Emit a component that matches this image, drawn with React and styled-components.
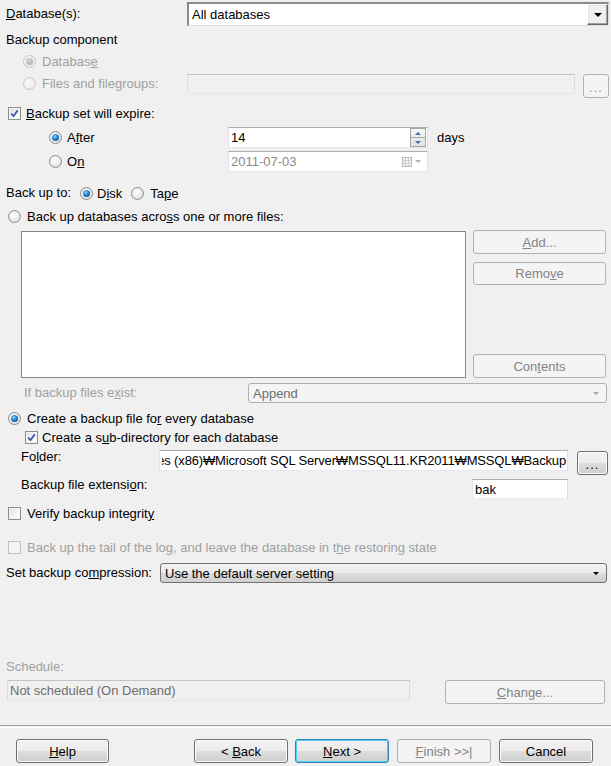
import React from 'react'
import styled, { createGlobalStyle, css } from 'styled-components'

const GlobalStyle = createGlobalStyle`
    html, body {
        margin: 0;
        padding: 0;
        background: #f0f0f0;
    }
    body {
        font-family: "Liberation Sans", Arial, sans-serif;
        font-size: 13px;
        color: #000;
    }
`

const Dialog = styled.div`
    width: 611px;
    height: 766px;
    display: flex;
    flex-direction: column;
    background: #f0f0f0;
    overflow: hidden;
`

const Row = styled.div`
    display: flex;
    align-items: ${props => props.$align || 'center'};
    height: ${props => props.$h || 18}px;
    margin-top: ${props => props.$mt || 0}px;
    padding-left: ${props => props.$pl || 0}px;
    gap: ${props => props.$gap || 0}px;
`

const Label = styled.span`
    display: inline-block;
    flex: none;
    width: ${props => (props.$w ? props.$w + 'px' : 'auto')};
    color: ${props => (props.$disabled ? '#a0a0a0' : '#000')};
    white-space: nowrap;
    line-height: 16px;
`

const Option = styled.label`
    display: flex;
    align-items: center;
    flex: none;
    gap: ${props => props.$gap || 5}px;
    width: ${props => (props.$w ? props.$w + 'px' : 'auto')};
    margin-right: ${props => props.$mr || 0}px;
    color: ${props => (props.$disabled ? '#a0a0a0' : '#000')};
    white-space: nowrap;
`

const RadioDot = styled.span`
    position: relative;
    flex: none;
    width: 11px;
    height: 11px;
    border-radius: 50%;
    border: 1px solid ${props => (props.$disabled ? '#c6c6c6' : '#8a8a8a')};
    background: ${props => (props.$disabled
        ? 'radial-gradient(circle at 40% 40%, #fafafa, #e6e6e6)'
        : 'radial-gradient(circle at 40% 40%, #ffffff, #d8d8d8)')};

    ${props => props.$checked && css`
        &::after {
            content: '';
            position: absolute;
            left: 2px;
            top: 2px;
            width: 7px;
            height: 7px;
            border-radius: 50%;
            background: ${props.$disabled
                ? 'radial-gradient(circle at 40% 35%, #d8d8d8, #a8a8a8)'
                : 'radial-gradient(circle at 40% 35%, #8ed8ff 0%, #1a7fd0 45%, #0b3f7a 100%)'};
        }
    `}
`

const CheckBox = styled.span`
    flex: none;
    width: 11px;
    height: 11px;
    border: 1px solid ${props => (props.$disabled ? '#c0c0c0' : '#8e8f8f')};
    background: ${props => (props.$disabled
        ? '#f4f4f4'
        : 'linear-gradient(135deg, #dcdcdc 0%, #ffffff 80%)')};
    box-shadow: inset 0 0 0 1px #f4f4f4;
    display: flex;
    align-items: center;
    justify-content: center;

    svg {
        display: block;
    }
`

const TextBox = styled.div`
    flex: none;
    box-sizing: border-box;
    width: ${props => props.$w}px;
    height: ${props => props.$h || 21}px;
    border: 1px solid;
    border-color: #abadb3 #dbdfe6 #e3e9ef #e2e3ea;
    background: ${props => (props.$disabled ? '#f0f0f0' : '#ffffff')};
    color: ${props => (props.$disabled ? '#8a8a8a' : '#000')};
    display: flex;
    align-items: center;
    padding-left: 2px;
    overflow: hidden;
    white-space: nowrap;
`

const DisabledField = styled(TextBox)`
    border-color: #c2c2c2 #dcdcdc #e6e6e6 #dcdcdc;
    background: #f0f0f0;
    color: #8d8d8d;
`

/* the path is scrolled to its end, like the real edit box */
const PathText = styled.div`
    flex: 1;
    overflow: hidden;
    white-space: nowrap;
    direction: rtl;
    padding-right: 1px;
    letter-spacing: -0.15px;

    span {
        direction: ltr;
        unicode-bidi: isolate;
    }
`

const BoxValue = styled.span`
    flex: 1;
    line-height: 16px;
`

const SpinButtons = styled.div`
    flex: none;
    width: 14px;
    height: 17px;
    margin-right: 1px;
    display: flex;
    flex-direction: column;
    border: 1px solid #a7a7a7;
    background: linear-gradient(#f6f6f6, #e2e2e2);
`

const SpinHalf = styled.div`
    flex: 1;
    display: flex;
    align-items: center;
    justify-content: center;
    border-top: ${props => (props.$down ? '1px solid #a7a7a7' : 'none')};
`

const TriUp = styled.span`
    width: 0;
    height: 0;
    border-left: 3px solid transparent;
    border-right: 3px solid transparent;
    border-bottom: 3px solid #4a68b0;
`

const TriDown = styled.span`
    width: 0;
    height: 0;
    border-left: ${props => props.$size || 3}px solid transparent;
    border-right: ${props => props.$size || 3}px solid transparent;
    border-top: ${props => props.$size || 3}px solid ${props => props.$color || '#000'};
`

const ClassicCombo = styled.div`
    flex: none;
    box-sizing: border-box;
    width: ${props => props.$w}px;
    height: 24px;
    border-top: 2px solid #8a8a8a;
    border-left: 2px solid #8a8a8a;
    border-bottom: 1px solid #dcdcdc;
    border-right: 1px solid #dcdcdc;
    background: #fff;
    display: flex;
    align-items: center;
    padding-left: 3px;
`

const ClassicDrop = styled.div`
    flex: none;
    box-sizing: border-box;
    width: 21px;
    height: 21px;
    margin-left: auto;
    background: #f0f0f0;
    border: 1px solid;
    border-color: #ffffff #696969 #696969 #ffffff;
    box-shadow: inset -1px -1px 0 #a0a0a0, inset 1px 1px 0 #e3e3e3;
    display: flex;
    align-items: center;
    justify-content: center;
`

const ButtonCombo = styled.div`
    flex: none;
    box-sizing: border-box;
    width: ${props => props.$w}px;
    height: 20px;
    border: 1px solid ${props => (props.$disabled ? '#adb2b5' : '#707070')};
    border-radius: 3px;
    background: ${props => (props.$disabled
        ? '#f4f4f4'
        : 'linear-gradient(#f2f2f2 0%, #ebebeb 50%, #dddddd 51%, #cfcfcf 100%)')};
    color: ${props => (props.$disabled ? '#6d6d6d' : '#000')};
    display: flex;
    align-items: center;
    justify-content: space-between;
    padding: 0 7px 0 4px;
`

const ListBox = styled.div`
    flex: none;
    box-sizing: border-box;
    width: 445px;
    height: 147px;
    border: 1px solid #828790;
    background: #fff;
`

const ButtonColumn = styled.div`
    flex: none;
    width: 133px;
    height: 148px;
    display: flex;
    flex-direction: column;
    gap: 8px;
    margin-top: -1px;

    & > :last-child {
        margin-top: auto;
    }
`

const Button = styled.div`
    flex: none;
    box-sizing: border-box;
    width: ${props => props.$w}px;
    height: ${props => props.$h || 24}px;
    margin-left: ${props => props.$ml || 0}px;
    border-radius: 3px;
    border: 1px solid #707070;
    background: linear-gradient(#f2f2f2 0%, #ebebeb 50%, #dddddd 51%, #cfcfcf 100%);
    box-shadow: inset 0 0 0 1px #fcfcfc;
    display: flex;
    align-items: center;
    justify-content: center;
    color: #000;
    white-space: pre;

    ${props => props.$disabled && css`
        border-color: #adb2b5;
        background: #f4f4f4;
        box-shadow: none;
        color: #838383;
    `}

    ${props => props.$focus && css`
        border-color: #3c7fb1;
        box-shadow: inset 0 0 0 1px #48d4f6;
    `}
`

const Dots = styled.span`
    letter-spacing: 1px;
    margin-top: 2px;
    color: ${props => (props.$disabled ? '#9a9a9a' : '#000')};
`

const Separator = styled.div`
    height: 1px;
    margin-top: 21px;
    border-top: 1px solid #a0a0a0;
    border-bottom: 1px solid #ffffff;
`

const Footer = styled.div`
    display: flex;
    align-items: center;
    height: 24px;
    margin-top: 11px;
    padding-left: 16px;
`

const Radio = ({ checked, disabled, children, ...rest }) => (
    <Option $disabled={disabled} {...rest}>
        <RadioDot $checked={checked} $disabled={disabled} />
        <span>{children}</span>
    </Option>
)

const Check = ({ checked, disabled, children, ...rest }) => (
    <Option $disabled={disabled} {...rest}>
        <CheckBox $disabled={disabled}>
            {checked && (
                <svg width="9" height="9" viewBox="0 0 9 9">
                    <path d="M1.2 4.6 L3.5 7 L7.8 1.4" fill="none" stroke="#3d5aa8" strokeWidth="1.8" />
                </svg>
            )}
        </CheckBox>
        <span>{children}</span>
    </Option>
)

const CalendarIcon = () => (
    <svg width="22" height="12" viewBox="0 0 22 12" style={{ marginRight: 4, flex: 'none' }}>
        <rect x="1.5" y="1.5" width="9" height="9" fill="#f4f4f4" stroke="#b8b8b8" />
        <path d="M1.5 4.5 H10.5 M1.5 7.5 H10.5 M4.5 1.5 V10.5 M7.5 1.5 V10.5" stroke="#cfcfcf" />
        <path d="M14 4 L20 4 L17 7 Z" fill="#b0b0b0" />
    </svg>
)

const App = () => {
    return (
        <Dialog>
            <GlobalStyle />

            <Row $h={24} $mt={2} $pl={6}>
                <Label $w={181}><u>D</u>atabase(s):</Label>
                <ClassicCombo $w={422}>
                    <span>All databases</span>
                    <ClassicDrop>
                        <TriDown $size={4} />
                    </ClassicDrop>
                </ClassicCombo>
            </Row>

            <Row $mt={5} $pl={6}>
                <Label>Backup component</Label>
            </Row>

            <Row $mt={3} $pl={23}>
                <Radio checked disabled $gap={6}>Databas<u>e</u></Radio>
            </Row>

            <Row $h={24} $mt={4} $pl={23} $align="flex-start">
                <Radio disabled $gap={6} $w={164} style={{ height: 18 }}>
                    Files and file<u>g</u>roups:
                </Radio>
                <DisabledField $w={388} $h={20} />
                <Button $w={26} $ml={8} $disabled>
                    <Dots $disabled>...</Dots>
                </Button>
            </Row>

            <Row $mt={6} $pl={8}>
                <Check checked><u>B</u>ackup set will expire:</Check>
            </Row>

            <Row $h={21} $mt={5} $pl={49}>
                <Radio checked $w={179}>A<u>f</u>ter</Radio>
                <TextBox $w={200}>
                    <BoxValue>14</BoxValue>
                    <SpinButtons>
                        <SpinHalf><TriUp /></SpinHalf>
                        <SpinHalf $down><TriDown $color="#4a68b0" /></SpinHalf>
                    </SpinButtons>
                </TextBox>
                <Label style={{ marginLeft: 9 }}>days</Label>
            </Row>

            <Row $h={21} $mt={3} $pl={49}>
                <Radio $w={179}>O<u>n</u></Radio>
                <TextBox $w={200} $disabled style={{ background: '#fff' }}>
                    <BoxValue>2011-07-03</BoxValue>
                    <CalendarIcon />
                </TextBox>
            </Row>

            <Row $mt={12} $pl={6}>
                <Label $w={74}>Back up to:</Label>
                <Radio checked $gap={4} $mr={9}>D<u>i</u>sk</Radio>
                <Radio $gap={6}>Ta<u>p</u>e</Radio>
            </Row>

            <Row $mt={5} $pl={8}>
                <Radio $gap={6}>Back up databases acro<u>s</u>s one or more files:</Radio>
            </Row>

            <Row $h={147} $mt={6} $pl={21} $gap={7} $align="flex-start">
                <ListBox />
                <ButtonColumn>
                    <Button $w={133} $disabled><u>A</u>dd...</Button>
                    <Button $w={133} $h={23} $disabled>Remo<u>v</u>e</Button>
                    <Button $w={133} $disabled>Con<u>t</u>ents</Button>
                </ButtonColumn>
            </Row>

            <Row $h={20} $mt={5} $pl={24}>
                <Label $w={224} $disabled>If backup files e<u>x</u>ist:</Label>
                <ButtonCombo $w={359} $disabled>
                    <span>Append</span>
                    <TriDown $color="#a8a8a8" />
                </ButtonCombo>
            </Row>

            <Row $mt={6} $pl={8}>
                <Radio checked $gap={6}>Create a backup file fo<u>r</u> every database</Radio>
            </Row>

            <Row $mt={1} $pl={25}>
                <Check checked $gap={4}>Create a s<u>u</u>b-directory for each database</Check>
            </Row>

            <Row $h={25} $mt={4} $pl={21} $align="flex-start">
                <Label $w={138} style={{ marginTop: -1 }}>Fo<u>l</u>der:</Label>
                <TextBox $w={409}>
                    <PathText>
                        <span>Files (x86)₩Microsoft SQL Server₩MSSQL11.KR2011₩MSSQL₩Backup</span>
                    </PathText>
                </TextBox>
                <Button $w={31} $ml={9} style={{ marginTop: 1 }}>
                    <Dots>...</Dots>
                </Button>
            </Row>

            <Row $h={21} $mt={4} $pl={21} $align="flex-start">
                <Label $w={451} style={{ marginTop: -2 }}>Backup file extensi<u>o</u>n:</Label>
                <TextBox $w={96} $h={20}>bak</TextBox>
            </Row>

            <Row $mt={4} $pl={8}>
                <Check $gap={6}>Verify backup integrit<u>y</u></Check>
            </Row>

            <Row $mt={16} $pl={8}>
                <Check disabled $gap={6}>Back up the tail of the log, and leave the database in t<u>h</u>e restoring state</Check>
            </Row>

            <Row $h={20} $mt={7} $pl={6}>
                <Label $w={154}>Set backup co<u>m</u>pression:</Label>
                <ButtonCombo $w={447}>
                    <span>Use the default server setting</span>
                    <TriDown />
                </ButtonCombo>
            </Row>

            <Row $mt={75} $pl={6}>
                <Label $disabled>Schedule:</Label>
            </Row>

            <Row $h={24} $mt={4} $pl={7} $align="flex-start">
                <DisabledField $w={403} $h={21} style={{ color: '#6d6d6d' }}>
                    Not scheduled (On Demand)
                </DisabledField>
                <Button $w={160} $ml={35} $disabled><u>C</u>hange...</Button>
            </Row>

            <Separator />

            <Footer>
                <Button $w={93}><u>H</u>elp</Button>
                <Button $w={94} $ml={85}>{'< '}<u>B</u>ack</Button>
                <Button $w={94} $ml={7} $focus><u>N</u>ext {'>'}</Button>
                <Button $w={94} $ml={8} $disabled><u>F</u>inish {'>>|'}</Button>
                <Button $w={94} $ml={8}>Cancel</Button>
            </Footer>
        </Dialog>
    )
}

export default App
